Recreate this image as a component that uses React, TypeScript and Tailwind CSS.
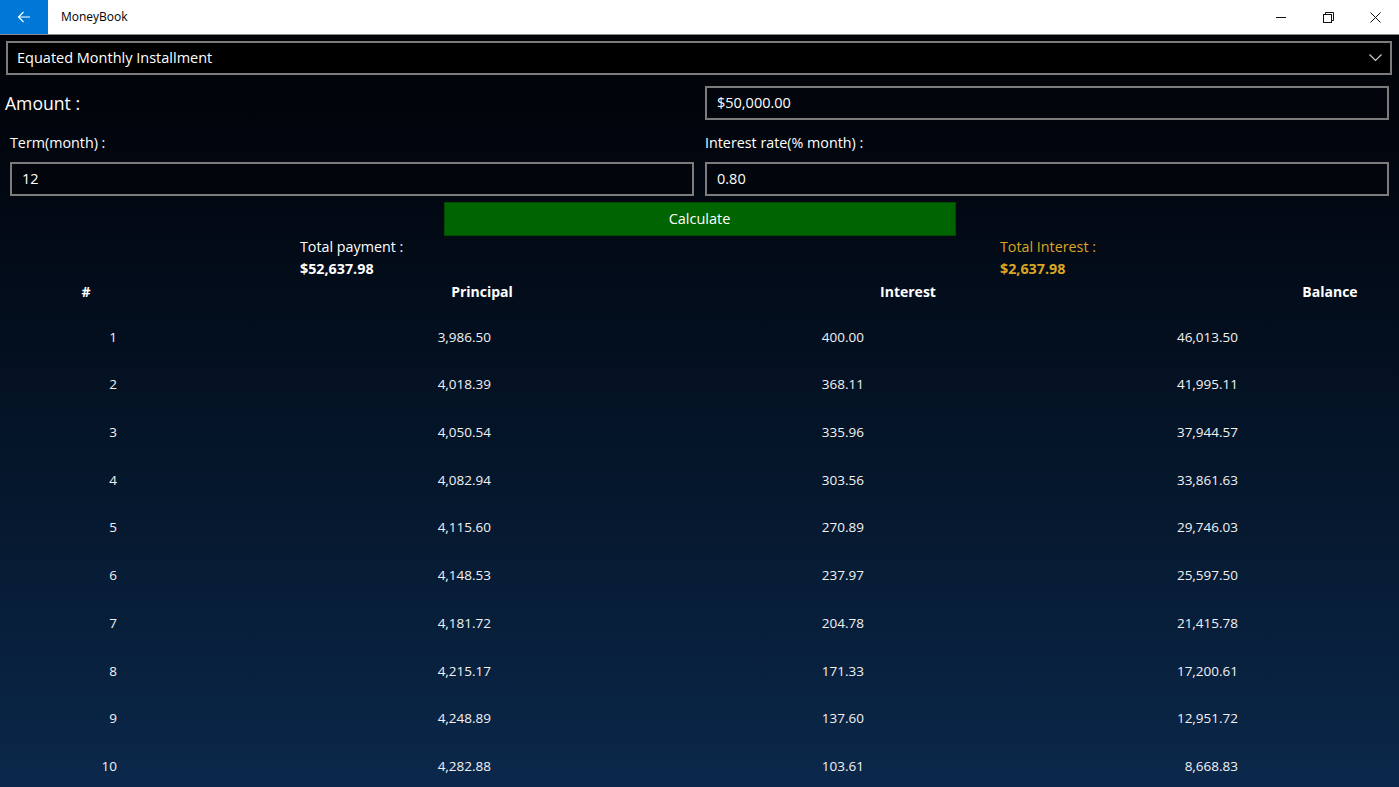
import React from 'react'

const rows = [
  ['1', '3,986.50', '400.00', '46,013.50'],
  ['2', '4,018.39', '368.11', '41,995.11'],
  ['3', '4,050.54', '335.96', '37,944.57'],
  ['4', '4,082.94', '303.56', '33,861.63'],
  ['5', '4,115.60', '270.89', '29,746.03'],
  ['6', '4,148.53', '237.97', '25,597.50'],
  ['7', '4,181.72', '204.78', '21,415.78'],
  ['8', '4,215.17', '171.33', '17,200.61'],
  ['9', '4,248.89', '137.60', '12,951.72'],
  ['10', '4,282.88', '103.61', '8,668.83'],
]

const TitleBar: React.FC = () => (
  <div className="h-[35px] bg-white border-b border-[#8a8a8a] flex items-stretch shrink-0">
    <div className="w-[48px] bg-[#0078d7] flex items-center justify-center">
      <svg width="14" height="12" viewBox="0 0 14 12" fill="none" stroke="white" strokeWidth="1.2">
        <path d="M13 6H1.5M6.5 1L1.5 6l5 5" />
      </svg>
    </div>
    <div className="flex items-center pl-[13px] text-[12px] text-black">MoneyBook</div>
    <div className="flex-1" />
    <div className="flex">
      <div className="w-[47px] flex items-center justify-center">
        <svg width="11" height="11" viewBox="0 0 11 11" stroke="#111" strokeWidth="1">
          <path d="M0 5.5h10" />
        </svg>
      </div>
      <div className="w-[47px] flex items-center justify-center">
        <svg width="11" height="11" viewBox="0 0 11 11" fill="none" stroke="#111" strokeWidth="1">
          <rect x="0.5" y="2.5" width="8" height="8" />
          <path d="M2.5 2.5V0.5h8v8h-2" />
        </svg>
      </div>
      <div className="w-[47px] flex items-center justify-center">
        <svg width="11" height="11" viewBox="0 0 11 11" stroke="#111" strokeWidth="1">
          <path d="M0.5 0.5l10 10M10.5 0.5l-10 10" />
        </svg>
      </div>
    </div>
  </div>
)

const Field: React.FC<{ value: string; className?: string }> = ({ value, className }) => (
  <div
    className={
      'h-[34px] border-2 border-[#7c7c7c] bg-[#02050b] flex items-center pl-[10px] text-[14.5px] text-white ' +
      (className || '')
    }
  >
    {value}
  </div>
)

export default function App() {
  return (
    <div
      className="w-[1399px] h-[787px] flex flex-col overflow-hidden"
      style={{ fontFamily: '"Segoe UI", "Open Sans", "Noto Sans", sans-serif' }}
    >
      <TitleBar />
      <div className="flex-1 flex flex-col bg-gradient-to-b from-[#010306] to-[#0b284b] text-white border-b border-[#5b6b80]">
        {/* mode picker */}
        <div className="mt-[6px] ml-[6px] mr-[7px] h-[34px] border-2 border-[#7c7c7c] bg-black flex items-center pl-[9px] pr-[8px] text-[14.5px]">
          <span className="flex-1">Equated Monthly Installment</span>
          <svg width="13" height="8" viewBox="0 0 13 8" fill="none" stroke="#cfcfcf" strokeWidth="1.2">
            <path d="M0.5 0.5l6 6 6-6" />
          </svg>
        </div>

        {/* amount */}
        <div className="mt-[11px] flex items-center">
          <div className="w-[705px] pl-[5px] text-[17.6px]">Amount :</div>
          <Field value="$50,000.00" className="w-[684px]" />
        </div>

        {/* term + rate */}
        <div className="mt-[13px] flex gap-[11px] pl-[10px]">
          <div className="w-[684px] flex flex-col">
            <div className="h-[20px] text-[14.3px] leading-[20px]">Term(month) :</div>
            <Field value="12" className="mt-[9px]" />
          </div>
          <div className="w-[684px] flex flex-col">
            <div className="h-[20px] text-[14.3px] leading-[20px]">Interest rate(% month) :</div>
            <Field value="0.80" className="mt-[9px]" />
          </div>
        </div>

        <button className="mt-[6px] mx-auto w-[512px] h-[34px] bg-[#006400] border border-[#004b00] text-[14.5px] text-white">
          Calculate
        </button>

        {/* totals */}
        <div className="flex text-[14.3px] leading-[22px]">
          <div className="ml-[300px] w-[700px]">
            <div>Total payment :</div>
            <div className="font-bold">$52,637.98</div>
          </div>
          <div className="text-[#dba623]">
            <div>Total Interest :</div>
            <div className="font-bold">$2,637.98</div>
          </div>
        </div>

        {/* table header */}
        <div className="flex h-[22px] items-center text-[14px] font-bold">
          <div className="w-[172px] text-center">#</div>
          <div className="w-[620px] text-center">Principal</div>
          <div className="w-[232px] text-center">Interest</div>
          <div className="flex-1" />
          <div className="w-[138px] text-center">Balance</div>
        </div>

        {/* table rows */}
        <div className="mt-[11px] flex flex-col text-[13.5px] text-[#f2f2f2]">
          {rows.map((r) => (
            <div key={r[0]} className="flex h-[47.7px] items-center shrink-0">
              <div className="w-[117px] text-right">{r[0]}</div>
              <div className="w-[374px] text-right">{r[1]}</div>
              <div className="w-[373px] text-right">{r[2]}</div>
              <div className="w-[374px] text-right">{r[3]}</div>
            </div>
          ))}
        </div>
      </div>
    </div>
  )
}
